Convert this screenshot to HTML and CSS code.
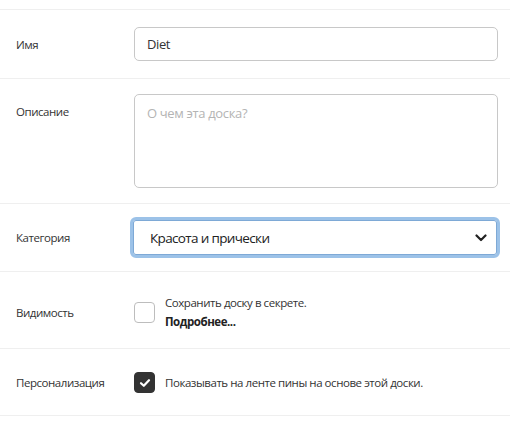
FILE: index.html
```html
<!DOCTYPE html>
<html lang="ru">
<head>
<meta charset="utf-8">
<title>Доска</title>
<link rel="stylesheet" href="styles.css">
</head>
<body>
<form class="board-form">
  <div class="row row-name">
    <div class="label">Имя</div>
    <div class="control"><div class="input">Diet</div></div>
  </div>
  <div class="row row-desc">
    <div class="label label-top">Описание</div>
    <div class="control"><div class="textarea"><span class="placeholder">О чем эта доска?</span></div></div>
  </div>
  <div class="row row-cat">
    <div class="label">Категория</div>
    <div class="control">
      <div class="select">
        <span>Красота и прически</span>
        <svg class="chevron" width="12" height="8" viewBox="0 0 12 8"><path d="M1.5 1.5 L6 6 L10.5 1.5" fill="none" stroke="#222" stroke-width="2.2" stroke-linecap="round" stroke-linejoin="round"/></svg>
      </div>
    </div>
  </div>
  <div class="row row-vis">
    <div class="label">Видимость</div>
    <div class="control check-line">
      <span class="box"></span>
      <div class="check-text">
        <div>Сохранить доску в секрете.</div>
        <div class="more">Подробнее...</div>
      </div>
    </div>
  </div>
  <div class="row row-pers">
    <div class="label">Персонализация</div>
    <div class="control check-line">
      <span class="box box-on">
        <svg width="12" height="10" viewBox="0 0 12 10"><path d="M2 5.2 L4.8 7.8 L10 2.2" fill="none" stroke="#fff" stroke-width="2.2" stroke-linecap="round" stroke-linejoin="round"/></svg>
      </span>
      <div class="check-text">Показывать на ленте пины на основе этой доски.</div>
    </div>
  </div>
</form>
</body>
</html>
```

FILE: styles.css
```css
html, body {
  margin: 0;
  background: #fff;
}
body {
  font-family: "Open Sans", "Noto Sans", sans-serif;
  color: #333;
}
.board-form {
  padding-top: 9px;
}
.row {
  display: grid;
  grid-template-columns: 134px 1fr;
  align-items: center;
  border-top: 1px solid #efefef;
}
.row-pers {
  border-bottom: 1px solid #efefef;
}
.label {
  padding-left: 16px;
  font-size: 11.5px;
  letter-spacing: -0.45px;
  color: #333;
}
.label-top {
  align-self: start;
  padding-top: 10px;
}
.row-name { padding: 17px 12px 17px 0; }
.row-desc { padding: 15px 12px 15px 0; }
.row-cat { padding: 13px 10px 13px 0; }
.row-vis { padding: 21px 12px 17px 0; }
.row-pers { padding: 23px 12px 22px 0; }

.input {
  box-sizing: border-box;
  height: 34px;
  border: 1px solid #c8c8c8;
  border-radius: 5px;
  padding: 0 12px;
  font-size: 13px;
  letter-spacing: -0.4px;
  line-height: 32px;
  color: #333;
}
.textarea {
  box-sizing: border-box;
  height: 94px;
  border: 1px solid #c8c8c8;
  border-radius: 5px;
  padding: 9px 12px;
  font-size: 13px;
  letter-spacing: -0.35px;
}
.placeholder {
  color: #b4b4b4;
}
.row-cat .control {
  margin-left: -4px;
}
.select {
  box-sizing: border-box;
  height: 41px;
  border: 3px solid #9cc2e8;
  border-radius: 6px;
  box-shadow: inset 0 0 0 1px #7ea9d6;
  display: flex;
  align-items: center;
  justify-content: space-between;
  padding: 0 10px 0 17px;
  font-size: 13.5px;
  letter-spacing: -0.65px;
  color: #222;
}
.chevron {
  display: block;
}
.check-line {
  display: flex;
  align-items: center;
  gap: 10px;
  font-size: 11.5px;
  letter-spacing: -0.45px;
  line-height: 19px;
}
.box {
  box-sizing: border-box;
  flex: none;
  width: 21px;
  height: 21px;
  border: 1px solid #bdbdbd;
  border-radius: 4px;
  background: #fff;
  display: flex;
  align-items: center;
  justify-content: center;
}
.box-on {
  background: #333;
  border-color: #333;
}
.more {
  font-weight: 700;
  color: #222;
}
```
